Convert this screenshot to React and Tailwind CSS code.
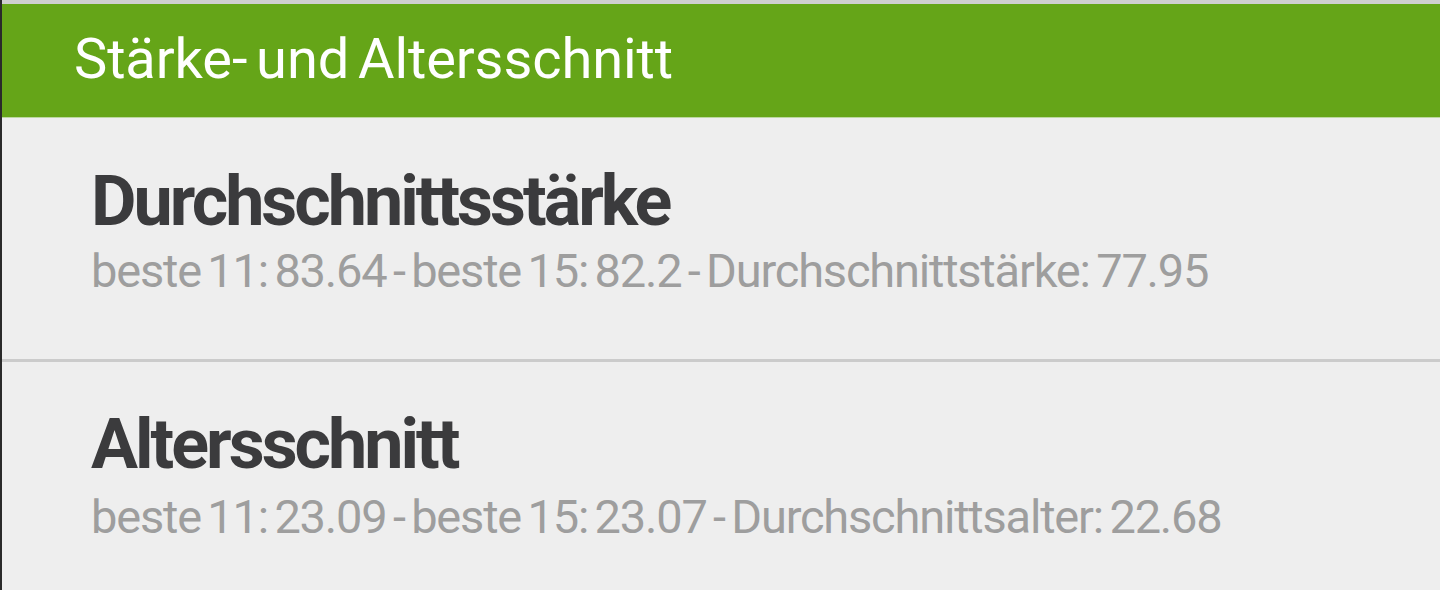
export default function App() {
  const items = [
    {
      title: "Durchschnittsstärke",
      sub: "beste 11: 83.64 - beste 15: 82.2 - Durchschnittstärke: 77.95",
    },
    {
      title: "Altersschnitt",
      sub: "beste 11: 23.09 - beste 15: 23.07 - Durchschnittsalter: 22.68",
    },
  ];

  return (
    <div className="w-[1440px] h-[590px] overflow-hidden bg-[#eeeeee] font-['Roboto',sans-serif] border-l-2 border-[#2a2a2a]">
      <div className="h-[4px] bg-[#cfcfcf]" />
      {/* Header */}
      <div className="h-[114px] bg-[#65a518] pl-[72px] pt-[27px] border-b border-[#bcd8a0]">
        <h1 className="text-[56px] leading-none text-white tracking-[-0.1px] [word-spacing:-5px]">
          Stärke- und Altersschnitt
        </h1>
      </div>

      {/* Rows */}
      <div className="h-[244px] pl-[89px] pt-[48px] border-b-[3px] border-[#cbcbcb]">
        <h2 className="text-[70px] leading-none font-bold text-[#3b3b3d] tracking-[-3px]">
          {items[0].title}
        </h2>
        <p className="mt-[11px] text-[47px] leading-none text-[#9e9e9e] tracking-[-1.2px] [word-spacing:-4px]">
          {items[0].sub}
        </p>
      </div>
      <div className="pl-[89px] pt-[47px]">
        <h2 className="text-[70px] leading-none font-bold text-[#3b3b3d] tracking-[-3px]">
          {items[1].title}
        </h2>
        <p className="mt-[14px] text-[47px] leading-none text-[#9e9e9e] tracking-[-1.2px] [word-spacing:-4px]">
          {items[1].sub}
        </p>
      </div>
    </div>
  );
}
